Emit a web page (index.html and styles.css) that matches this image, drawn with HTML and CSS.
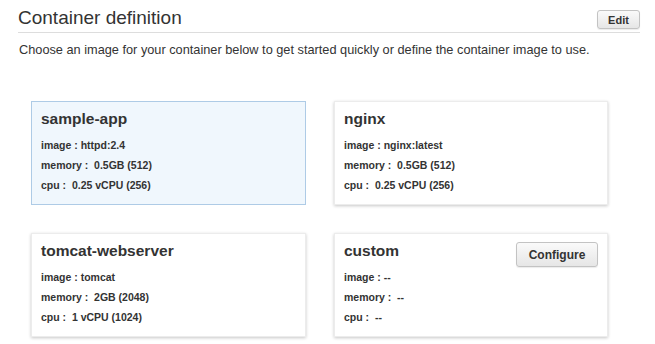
FILE: index.html
```html
<!DOCTYPE html>
<html>
<head>
<meta charset="utf-8">
<link rel="stylesheet" href="styles.css">
</head>
<body>
<div class="page">
  <div class="header">
    <h1 class="title">Container definition</h1>
    <button class="btn btn-edit">Edit</button>
  </div>
  <p class="intro">Choose an image for your container below to get started quickly or define the container image to use.</p>
  <div class="grid">
    <div class="card selected">
      <div class="card-name">sample-app</div>
      <div class="row">image : httpd:2.4</div>
      <div class="row">memory :&nbsp; 0.5GB (512)</div>
      <div class="row">cpu :&nbsp; 0.25 vCPU (256)</div>
    </div>
    <div class="card">
      <div class="card-name">nginx</div>
      <div class="row">image : nginx:latest</div>
      <div class="row">memory :&nbsp; 0.5GB (512)</div>
      <div class="row">cpu :&nbsp; 0.25 vCPU (256)</div>
    </div>
    <div class="card">
      <div class="card-name">tomcat-webserver</div>
      <div class="row">image : tomcat</div>
      <div class="row">memory :&nbsp; 2GB (2048)</div>
      <div class="row">cpu :&nbsp; 1 vCPU (1024)</div>
    </div>
    <div class="card custom">
      <div class="card-name">custom</div>
      <div class="row">image : --</div>
      <div class="row">memory :&nbsp; --</div>
      <div class="row">cpu :&nbsp; --</div>
      <button class="btn btn-configure">Configure</button>
    </div>
  </div>
</div>
</body>
</html>
```
FILE: styles.css
```css
html, body {
  margin: 0;
  padding: 0;
  background: #ffffff;
}
body {
  font-family: "Liberation Sans", Arial, sans-serif;
  color: #333333;
}
.page {
  width: 655px;
  height: 344px;
  overflow: hidden;
}
.header {
  display: flex;
  align-items: flex-start;
  justify-content: space-between;
  margin: 0 15px 0 18px;
  height: 33px;
  border-bottom: 1px solid #dddddd;
  box-sizing: border-box;
}
.title {
  margin: 7px 0 0 0;
  font-size: 19px;
  font-weight: normal;
  line-height: 22px;
  color: #333333;
}
.btn {
  font-family: "Liberation Sans", Arial, sans-serif;
  font-weight: bold;
  color: #333333;
  background: linear-gradient(#fafafa, #e6e6e6);
  border: 1px solid #c3c3c3;
  border-radius: 3px;
  box-shadow: 0 1px 1px rgba(0,0,0,0.08);
  padding: 0;
  cursor: pointer;
}
.btn-edit {
  margin-top: 10px;
  width: 43px;
  height: 19px;
  font-size: 11px;
}
.intro {
  margin: 9px 0 0 19px;
  font-size: 12.75px;
  line-height: 16px;
  color: #333333;
}
.grid {
  display: grid;
  grid-template-columns: 275px 274px;
  grid-auto-rows: 104px;
  column-gap: 28px;
  row-gap: 28px;
  margin: 43px 0 0 31px;
}
.card {
  position: relative;
  background: #ffffff;
  border: 1px solid #ececec;
  box-shadow: 0 1px 3px rgba(0,0,0,0.22);
  padding: 7px 10px 0 9px;
  box-sizing: border-box;
}
.card.selected {
  background: #f0f7fd;
  border: 1px solid #aecbe6;
  box-shadow: none;
}
.card-name {
  font-size: 15.5px;
  font-weight: bold;
  line-height: 20px;
  color: #333333;
  margin-bottom: 6px;
}
.row {
  font-size: 10.5px;
  font-weight: bold;
  line-height: 20px;
  color: #333333;
}
.btn-configure {
  position: absolute;
  top: 8px;
  right: 9px;
  width: 82px;
  height: 25px;
  font-size: 12px;
}
```
